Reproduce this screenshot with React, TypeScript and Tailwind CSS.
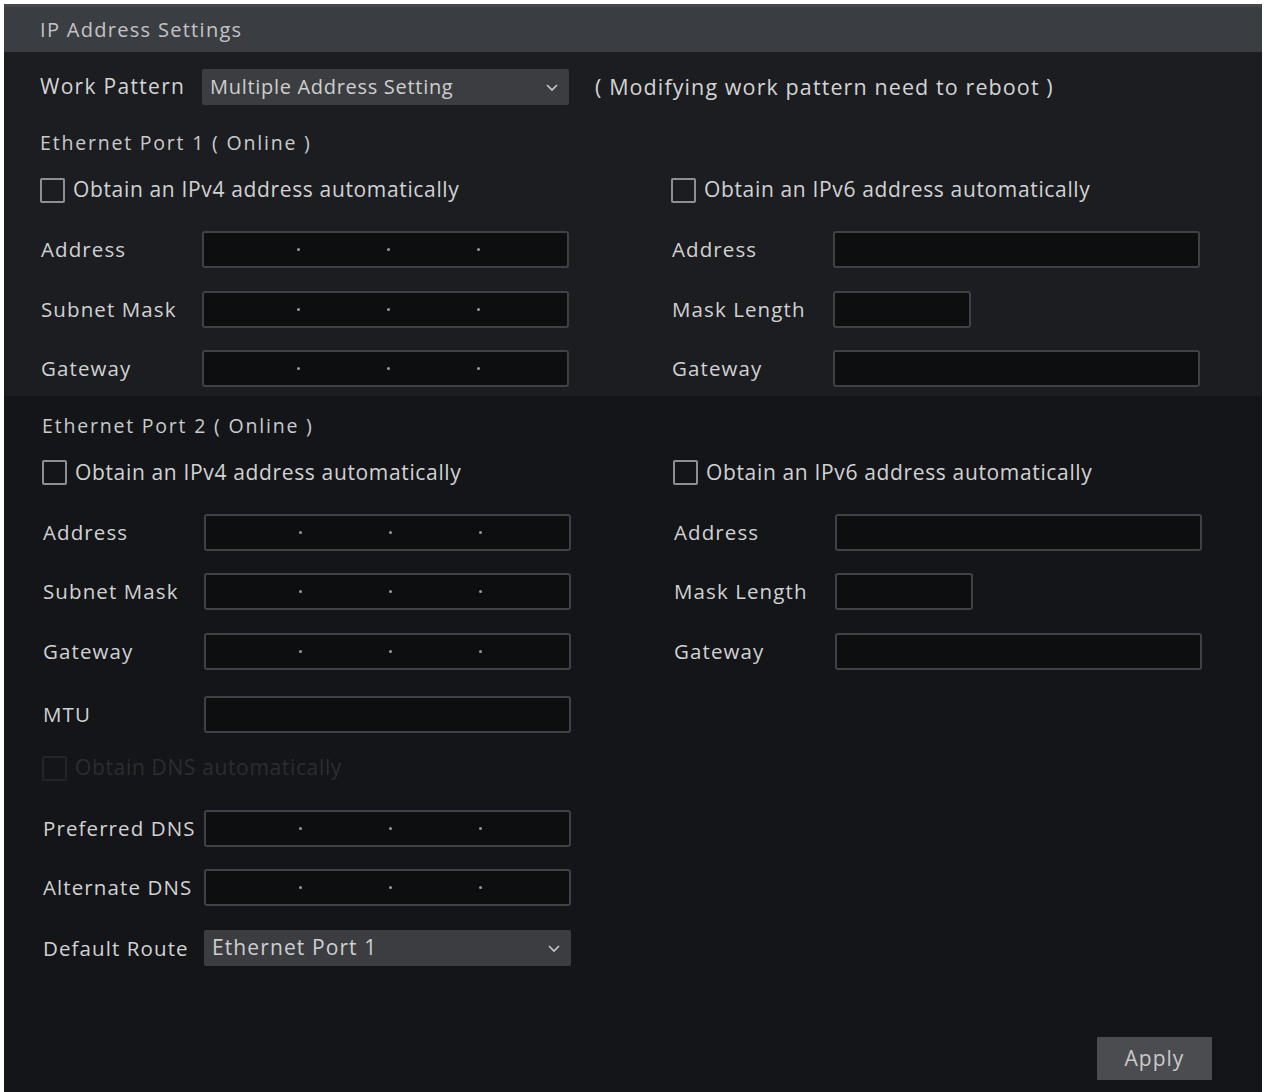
import { ReactNode } from "react";

const font = { fontFamily: '"Open Sans", "Noto Sans", sans-serif' };

const Chevron = () => (
  <svg width="14" height="9" viewBox="0 0 14 9" className="shrink-0">
    <path d="M2 2 L7 7 L12 2" fill="none" stroke="#c9c9c9" strokeWidth="1.6" />
  </svg>
);

const Checkbox = ({ label, dim = false }: { label: string; dim?: boolean }) => (
  <div className="flex items-center h-[36px] gap-[8px]">
    <div
      className={`w-[25px] h-[25px] rounded-[2px] border-2 ${
        dim ? "border-[#222427]" : "border-[#8d8f93]"
      }`}
    />
    <span className={`text-[21px] tracking-[0.65px] ${dim ? "text-[#2b2d31]" : "text-[#d2d2d2]"}`}>
      {label}
    </span>
  </div>
);

const IpBox = () => (
  <div className="flex items-center w-[367px] h-[37px] border-2 border-[#3f4146] rounded-[3px] bg-[#0d0e10] pl-[6px]">
    <span className="flex-1" />
    <span className="w-[3px] h-[3px] rounded-full bg-[#9a9a9a]" />
    <span className="flex-1" />
    <span className="w-[3px] h-[3px] rounded-full bg-[#9a9a9a]" />
    <span className="flex-1" />
    <span className="w-[3px] h-[3px] rounded-full bg-[#9a9a9a]" />
    <span className="flex-1" />
  </div>
);

const TextBox = ({ w = "w-[367px]" }: { w?: string }) => (
  <div className={`${w} h-[37px] border-2 border-[#3f4146] rounded-[3px] bg-[#0d0e10]`} />
);

const Field = ({ label, children }: { label: string; children: ReactNode }) => (
  <div className="flex items-center h-[36px]">
    <span className="w-[162px] pl-[1px] text-[20.5px] tracking-[1.1px] text-[#d2d2d2]">{label}</span>
    {children}
  </div>
);

const Select = ({ value, narrow = false }: { value: string; narrow?: boolean }) => (
  <div className="flex items-center justify-between w-[367px] h-[36px] rounded-[2px] bg-[#3b3d41] pl-[8px] pr-[10px]">
    <span
      className={`text-[#cfcfcf] ${narrow ? "text-[20px] tracking-[0.7px]" : "text-[21px] tracking-[1.1px]"}`}
    >
      {value}
    </span>
    <Chevron />
  </div>
);

const PortBlock = ({ port }: { port: number }) => (
  <>
    <div className="flex items-center h-[36px] text-[19.5px] tracking-[1.8px] text-[#cbcbcb]">
      Ethernet Port {port} ( Online )
    </div>
    <div className="flex mt-[11px]">
      <div className="w-[631px] flex flex-col gap-[23.5px]">
        <Checkbox label="Obtain an IPv4 address automatically" />
        <Field label="Address">
          <IpBox />
        </Field>
        <Field label="Subnet Mask">
          <IpBox />
        </Field>
        <Field label="Gateway">
          <IpBox />
        </Field>
      </div>
      <div className="flex-1 flex flex-col gap-[23.5px]">
        <Checkbox label="Obtain an IPv6 address automatically" />
        <Field label="Address">
          <TextBox />
        </Field>
        <Field label="Mask Length">
          <TextBox w="w-[138px]" />
        </Field>
        <Field label="Gateway">
          <TextBox />
        </Field>
      </div>
    </div>
  </>
);

export default function App() {
  return (
    <div className="bg-white min-h-[1092px] pl-[4px] pt-[4px] pr-[2px]" style={font}>
      <div className="h-[1088px] flex flex-col bg-[#131518]">
        {/* Title bar */}
        <div className="h-[48px] flex items-center pl-[36px] bg-[#3a3d42] border-t-[3px] border-[#44474c]">
          <span className="text-[20px] text-[#c4c4c4] tracking-[1.3px]">IP Address Settings</span>
        </div>

        {/* Work pattern + port 1 */}
        <div className="bg-[#1b1d21] pl-[36px] pt-[17px] pb-[9px]">
          <div className="flex items-center h-[36px]">
            <span className="w-[162px] text-[21px] tracking-[1.3px] text-[#d4d4d4]">Work Pattern</span>
            <Select value="Multiple Address Setting" narrow />
            <span className="ml-[26px] text-[21.5px] tracking-[1.1px] text-[#d4d4d4]">
              ( Modifying work pattern need to reboot )
            </span>
          </div>
          <div className="mt-[20px]">
            <PortBlock port={1} />
          </div>
        </div>

        {/* Port 2 */}
        <div className="flex-1 flex flex-col pl-[38px] pt-[12px]">
          <PortBlock port={2} />
          <div className="w-[631px] flex flex-col">
            <div className="mt-[27px]">
              <Field label="MTU">
                <TextBox />
              </Field>
            </div>
            <div className="mt-[18px]">
              <Checkbox label="Obtain DNS automatically" dim />
            </div>
            <div className="mt-[24px]">
              <Field label="Preferred DNS">
                <IpBox />
              </Field>
            </div>
            <div className="mt-[23px]">
              <Field label="Alternate DNS">
                <IpBox />
              </Field>
            </div>
            <div className="mt-[25px]">
              <Field label="Default Route">
                <Select value="Ethernet Port 1" />
              </Field>
            </div>
          </div>
          <div className="flex justify-end pr-[50px] mt-[71px]">
            <button className="w-[115px] h-[43px] bg-[#4a4c50] text-[21px] tracking-[1px] text-[#cacaca] rounded-[1px]">
              Apply
            </button>
          </div>
        </div>
      </div>
    </div>
  );
}
